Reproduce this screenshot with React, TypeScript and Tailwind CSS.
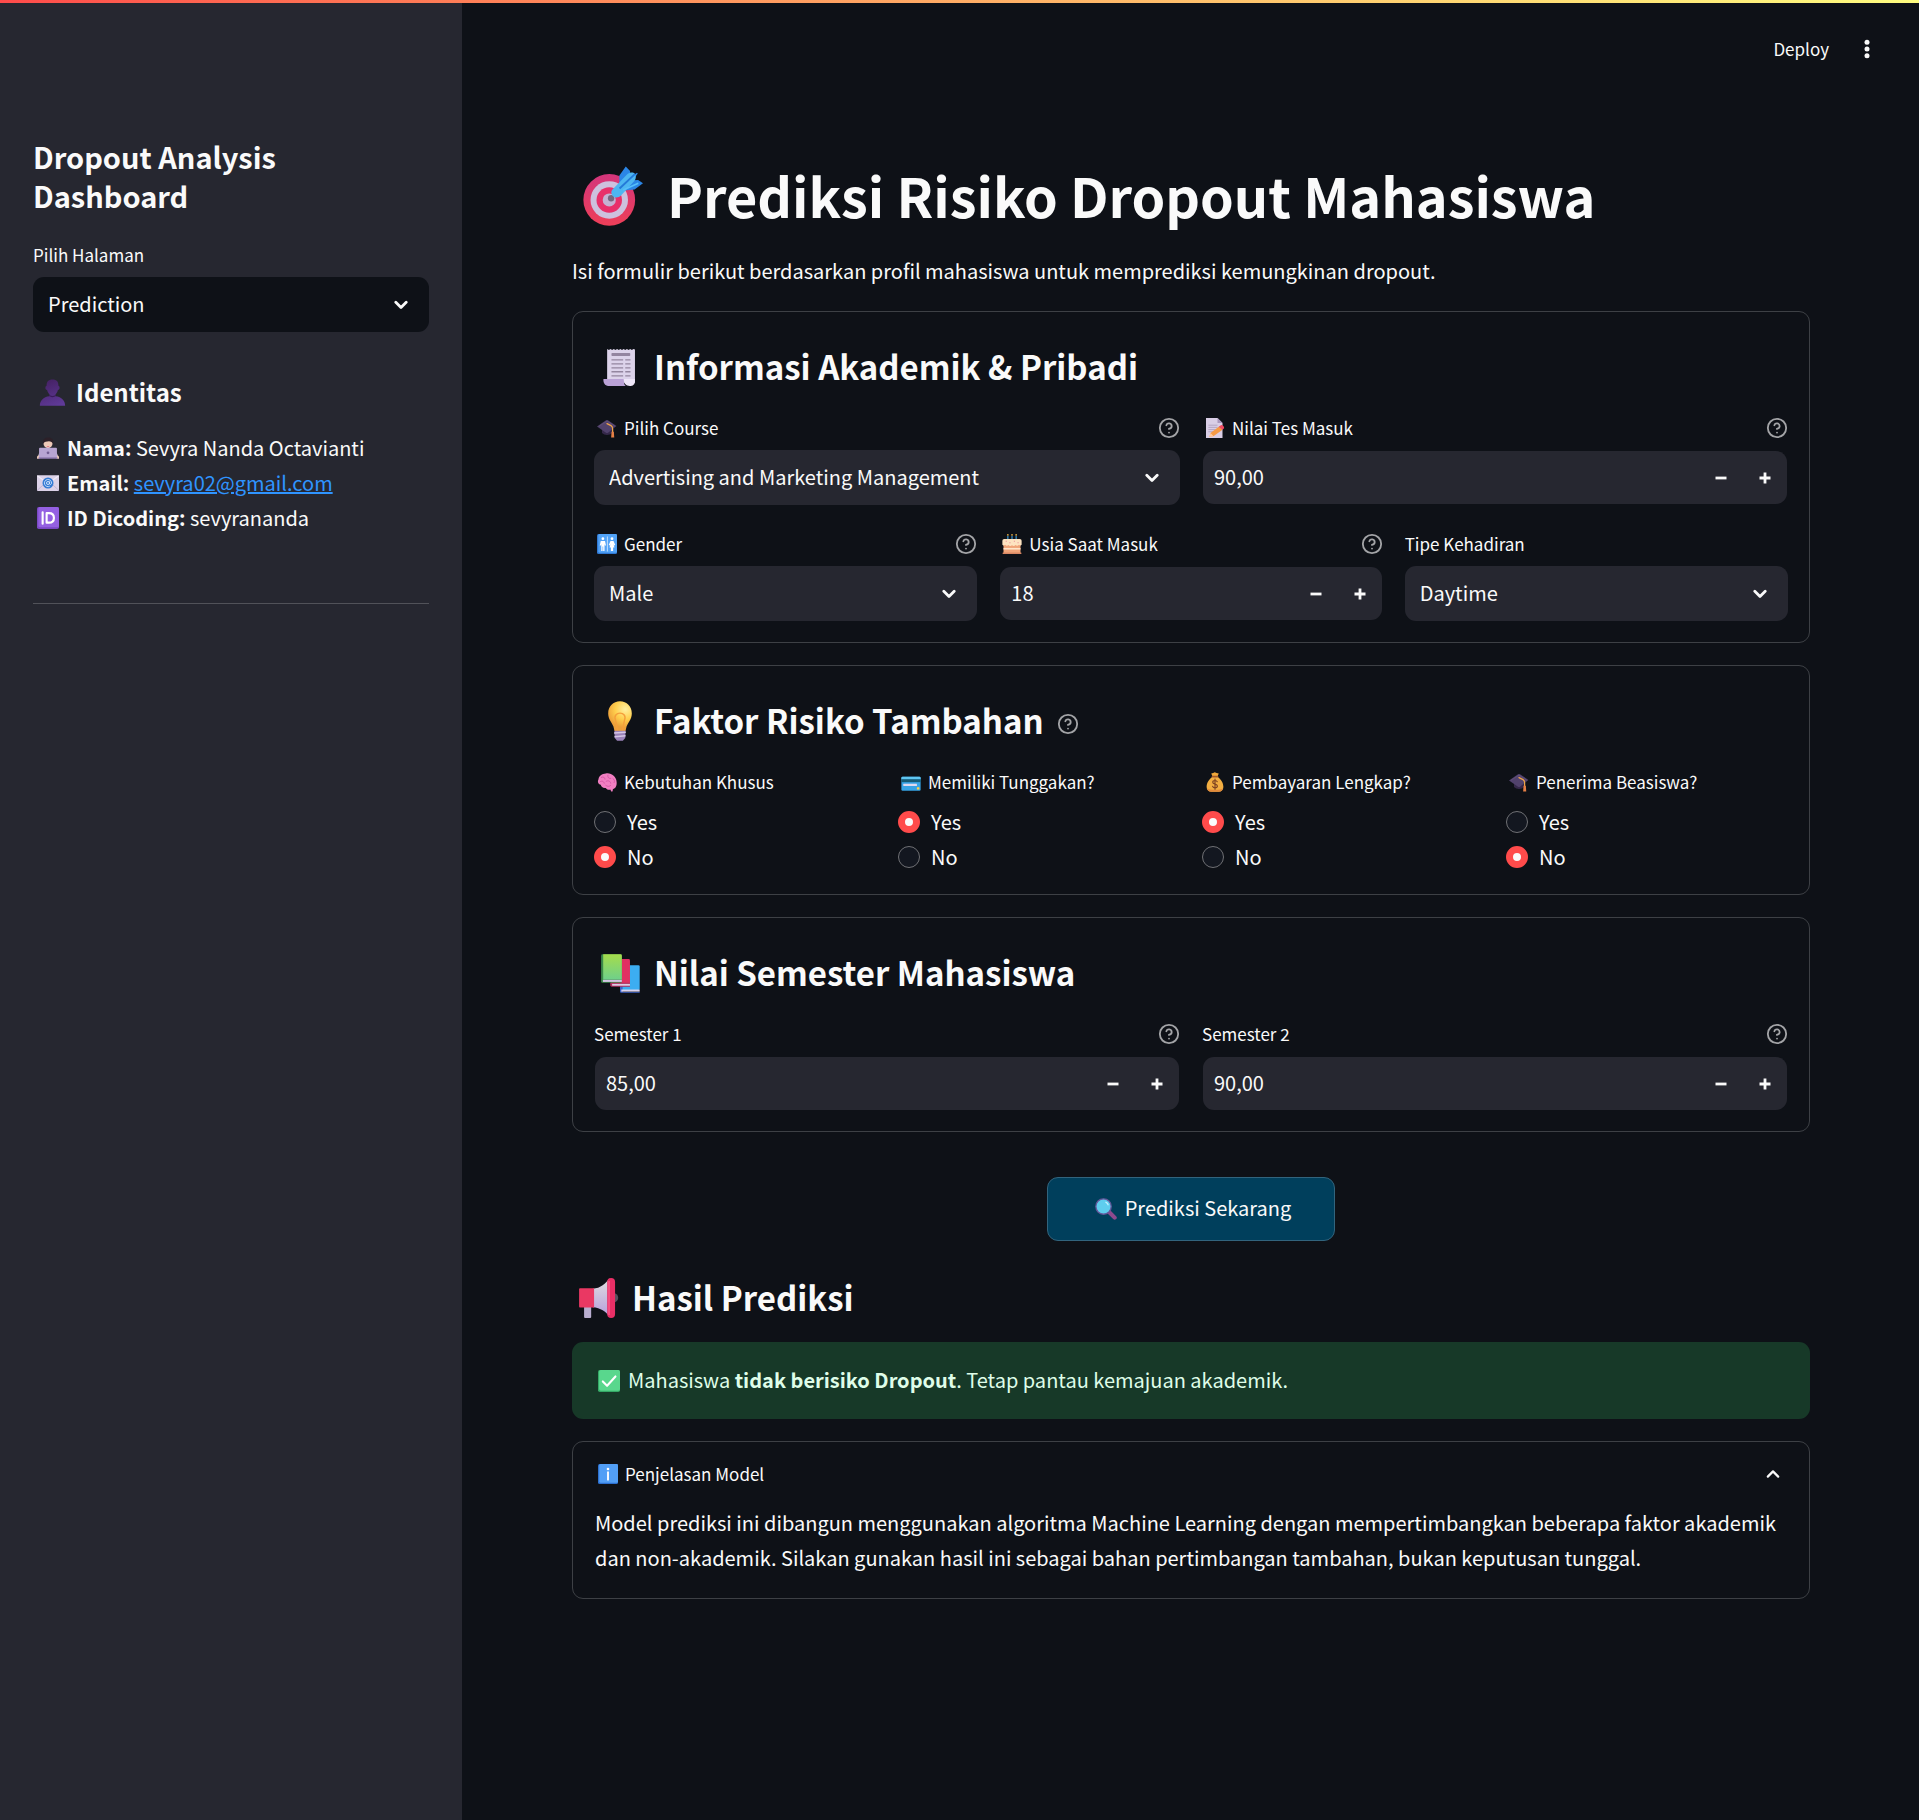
import { useId, useState } from "react";
import type { ReactNode } from "react";

type IconProps = { className?: string };

function Art({ className = "", children }: { className?: string; children: ReactNode }) {
  return (
    <svg viewBox="0 0 32 32" className={"shrink-0 " + className} aria-hidden="true" fill="none">
      {children}
    </svg>
  );
}

function TargetArt({ className }: IconProps) {
  return (
    <Art className={className}>
      <defs>
        <linearGradient id="target-red" x1="14" y1="4" x2="14" y2="32" gradientUnits="userSpaceOnUse">
          <stop stopColor="#d3357c" />
          <stop offset="1" stopColor="#ee3f58" />
        </linearGradient>
      </defs>
      <circle cx="14" cy="18.1" r="13.8" fill="url(#target-red)" />
      <circle cx="14" cy="18.1" r="10" fill="#cdc1de" />
      <circle cx="14" cy="18.1" r="6.8" fill="#e8306a" />
      <circle cx="14" cy="18.1" r="3.5" fill="#c3b2d2" />
      <circle cx="15" cy="17.2" r="1.7" fill="#75677f" />
      <path d="M19.4 10.5V5L22.8 0.2 25.1 2.6 25 6.2 28.8 3.6 29.2 4 26.6 7.6 29.4 7.4 32 9.2 27.5 12.5 22 13Z" fill="#2b86e6" />
      <path d="M15.6 12.6 23.6 4.4C25 3.2 27 3.2 27.6 4.2 28.6 5.6 28.2 7.2 27 8.4L20.4 15.6C18.8 17.2 16.6 17 15.8 15.8 15 14.8 14.8 13.6 15.6 12.6Z" fill="#4db6f1" />
      <path d="M19.5 12 27.8 4.2" stroke="#2379d8" strokeWidth="1" />
      <path d="M21.5 12.8 29.5 9.2" stroke="#56c0fa" strokeWidth=".9" />
    </Art>
  );
}

function ScrollArt({ className }: IconProps) {
  return (
    <Art className={className}>
      <path d="M6.2 2.2 7.5 3 8.8 2.2 10 3 11.3 2.2 12.5 3 13.8 2.2 15 3 16.3 2.2 17.5 3 18.8 2.2 20 3 21.3 2.2 22.5 3 23.8 2.2 25 3 26.3 2.2 27.4 2.6V28H6.2Z" fill="#dcd3ea" />
      <rect x="9.5" y="5.4" width="14.3" height="2.2" rx=".5" fill="#9385a0" />
      <path d="M9.5 10.6H18.4M20 10.6H24M9.5 13.6H18.4M20 13.6H24M9.5 16.6H18.4M20 16.6H24M9.5 19.6H18.4M20 19.6H24M9.5 22.7H18.4M20 22.7H24" stroke="#93869f" strokeWidth="1" />
      <path d="M3.4 25.2H18.8C19.2 27 18.6 29.2 20.4 30.4H7C4.6 30.4 3 28 3.4 25.2Z" fill="#baa2d6" />
      <path d="M18.9 25.2H27.4V26.8C27.4 29.2 25.8 30.5 23.4 30.5 20.6 30.5 19 29 18.9 25.2Z" fill="#eee6f8" />
    </Art>
  );
}

function BulbArt({ className }: IconProps) {
  return (
    <Art className={className}>
      <defs>
        <radialGradient id="bulb-glow" cx="20" cy="7" r="14" gradientUnits="userSpaceOnUse">
          <stop stopColor="#fff0a0" />
          <stop offset=".55" stopColor="#ffcf4d" />
          <stop offset="1" stopColor="#eda03a" />
        </radialGradient>
      </defs>
      <path d="M16 1C21.2 1 25 5 25 10.2 25 14.6 22 17.2 21 20.2L20.2 23.6H11.8L11 20.2C10 17.2 7 14.6 7 10.2 7 5 10.8 1 16 1Z" fill="url(#bulb-glow)" />
      <path d="M14.2 23.4 12.6 15.4C11.2 12 13.4 10 16 10S20.8 12 19.4 15.4L17.8 23.4" stroke="#f5a03c" strokeWidth="1.1" />
      <path d="M11.7 23.4H20.3L20 29 18.2 31H13.8L12 29Z" fill="#9a82b8" />
      <path d="M11.5 25.2 20.4 24.6M11.8 28 20.2 27.2" stroke="#d5c6e6" strokeWidth="1.2" />
    </Art>
  );
}

function BooksArt({ className }: IconProps) {
  return (
    <Art className={className}>
      <defs>
        <linearGradient id="book-green" x1="10" y1="2" x2="10" y2="21" gradientUnits="userSpaceOnUse">
          <stop stopColor="#a5dc4c" />
          <stop offset="1" stopColor="#6fd08a" />
        </linearGradient>
      </defs>
      <rect x="16" y="10" width="15" height="19" rx="1" fill="#3cadf2" />
      <path d="M16 26H18V30.4H31V31H16.8Q16 31 16 30Z" fill="#3c63c9" />
      <rect x="17" y="28.6" width="14" height="1.6" fill="#d9d2ee" />
      <rect x="9" y="5.4" width="14.6" height="20" rx="1" fill="#e03062" />
      <path d="M8.6 23.5H23.6V26.4H9.6Q8.6 26.4 8.6 25.4Z" fill="#b0305f" />
      <rect x="10" y="24.3" width="13.6" height="1.4" fill="#dccbe6" />
      <rect x="1.6" y="1.8" width="15.8" height="21.6" rx="1" fill="#3d8a4a" />
      <path d="M3.2 1.8H16.4Q17.4 1.8 17.4 2.8V21H3.2Z" fill="url(#book-green)" />
      <rect x="3" y="21.2" width="14.4" height="1.6" fill="#d2c4e4" />
    </Art>
  );
}

function MegaphoneArt({ className }: IconProps) {
  return (
    <Art className={className}>
      <defs>
        <linearGradient id="horn" x1="17" y1="4" x2="17" y2="28" gradientUnits="userSpaceOnUse">
          <stop stopColor="#dcd8e0" />
          <stop offset="1" stopColor="#b9a3dc" />
        </linearGradient>
      </defs>
      <g transform="translate(1 0)">
        <circle cx="27" cy="15.8" r="3.4" fill="#56505e" />
        <rect x="4.4" y="22" width="5.4" height="9.2" rx=".8" fill="#b9aed0" />
        <path d="M11 9C17 8.6 21 5 23.6 1V30C21 26.4 17 23.4 11 23Z" fill="url(#horn)" />
        <path d="M1.2 8.6H12V23.2H1.2Q.6 23.2 .6 22.4V9.4Q.6 8.6 1.2 8.6Z" fill="#ea3863" />
        <rect x="22" y=".8" width="6" height="30.4" rx="3" fill="#e92f66" />
        <path d="M23.4 3V29" stroke="#ff5c8c" strokeWidth="1" />
      </g>
    </Art>
  );
}

function PersonArt({ className }: IconProps) {
  return (
    <Art className={className}>
      <defs>
        <linearGradient id="bust" x1="10" y1="2" x2="22" y2="32" gradientUnits="userSpaceOnUse">
          <stop stopColor="#462266" />
          <stop offset="1" stopColor="#5f3a98" />
        </linearGradient>
      </defs>
      <path d="M16 .5C21 .5 23 3 23 8 25 8.4 25 13 22.4 13 21.6 16 20.4 17.2 19.6 18V20.4C27 21 31 26 31 31.6H1C1 26 5 21 12.4 20.4V18C11.6 17.2 10.4 16 9.6 13 7 13 7 8.4 9 8 9 3 11 .5 16 .5Z" fill="url(#bust)" />
      <path d="M12 19.4C14.6 21.4 17.4 21.4 20 19.4" stroke="#3a1c5a" strokeWidth="1.4" />
    </Art>
  );
}

function TechnologistArt({ className }: IconProps) {
  return (
    <Art className={className}>
      <path d="M2 30C1 22 7 18.6 16 18.6S31 22 30 30Z" fill="#cfc5da" />
      <circle cx="16" cy="9.6" r="6.6" fill="#edc9b8" />
      <path d="M8.8 10C7.6 3.6 11.6.6 16.4.8 21.6.8 24.8 3.8 23.4 10 22.4 7 20 6.6 17.4 6 14 6.4 10.6 6.4 8.8 10Z" fill="#2c2028" />
      <path d="M14 13.4Q16 15 18 13.4Z" fill="#d3305a" />
      <path d="M0 29.4C0 27 2 26.6 3.6 27V31.6H0ZM32 29.4C32 27 30 26.6 28.4 27V31.6H32Z" fill="#edc9b8" />
      <rect x="3" y="15.6" width="26" height="14.6" rx="1.4" fill="#b7a5d2" />
      <rect x="2" y="29.4" width="28" height="2.4" rx="1" fill="#927db4" />
      <circle cx="16" cy="23" r="2" fill="#715d92" />
    </Art>
  );
}

function EmailArt({ className }: IconProps) {
  return (
    <Art className={className}>
      <rect y="4.6" width="32" height="23" rx="1.4" fill="#dcd2e8" />
      <path d="M0 27 12 16M32 27 20 16" stroke="#bfb0d2" strokeWidth="1.2" />
      <path d="M.4 5.4 16 17 31.6 5.4" stroke="#f2ecf8" strokeWidth="1.6" />
      <circle cx="16" cy="16" r="8" fill="#347bd4" />
      <circle cx="16" cy="16" r="2.2" stroke="#dcecff" strokeWidth="1.3" />
      <path d="M18.3 13.6V17.2C18.8 19 21.2 18.2 21.2 16A5.2 5.2 0 1 0 18.6 20.6" stroke="#dcecff" strokeWidth="1.2" />
    </Art>
  );
}

function IdArt({ className }: IconProps) {
  return (
    <Art className={className}>
      <rect width="32" height="32" rx="2.6" fill="#7b48c6" />
      <rect x="2" width="30" height="29.6" rx="2.4" fill="#9460e2" />
      <path d="M8.2 7.6V24.2M14 9V22.8H17.4C22.6 22.8 24.6 20 24.6 15.9S22.6 9 17.4 9Z" stroke="#fff" strokeWidth="3.1" strokeLinecap="round" strokeLinejoin="round" />
    </Art>
  );
}

function CapArt({ className }: IconProps) {
  return (
    <Art className={className}>
      <path d="M8 14V24C12 28 20 28 24 24V14Z" fill="#35284a" />
      <path d="M0 13.5 14.5 3.4Q16 2.6 17.5 3.4L31 12.6 17.6 23.6Q16 24.6 14.4 23.6Z" fill="#51426c" />
      <path d="M3 13.4 16 5 28 12.8" stroke="#66557f" strokeWidth="1" />
      <path d="M16 9 22.4 12.2Q25 13.6 25 17V23" stroke="#efa54a" strokeWidth="2" strokeLinecap="round" />
      <path d="M23.2 22H27L27.6 31H22.6Z" fill="#e57f45" />
    </Art>
  );
}

function MemoArt({ className }: IconProps) {
  return (
    <Art className={className}>
      <path d="M1.6 0H20L28 8V32H1.6Z" fill="#d9cee6" />
      <path d="M20 0V8H28Z" fill="#a897bd" />
      <path d="M5.4 11.5H20M5.4 15H20M5.4 18.5H17M5.4 22H14" stroke="#a99ab8" strokeWidth="1.2" />
      <path d="M7 30.4 8.8 23.8 22.6 13.4 28 18.6 14 28.8Z" fill="#f69a45" />
      <path d="M22 13.8 25.4 11.4C27.6 10.6 31 13.4 30.6 16.4L27.6 18.8Z" fill="#ef4a62" />
      <path d="M7 30.4 8.8 23.8 13.8 29Z" fill="#ffc9a0" />
    </Art>
  );
}

function RestroomArt({ className }: IconProps) {
  return (
    <Art className={className}>
      <rect width="32" height="32" rx="2.4" fill="#2f78d2" />
      <rect x="2" width="30" height="30" rx="2.2" fill="#52a3f7" />
      <path d="M16.6 4V28" stroke="#e8f4ff" strokeWidth="1.2" />
      <circle cx="9.4" cy="7.4" r="2.2" fill="#fff" />
      <path d="M6 11H12.8L14.4 18.4H12.6L12 16V27H9.9V20H8.9V27H6.8V16L6.2 18.4H4.4Z" fill="#fff" />
      <circle cx="24" cy="7.4" r="2.2" fill="#fff" />
      <path d="M21.6 11H26.4L29.2 17.6 27.6 18.2 26.4 15.8 28 21.4H25.8V27H22.2V21.4H20L21.6 15.8 20.4 18.2 18.8 17.6Z" fill="#fff" />
    </Art>
  );
}

function CakeArt({ className }: IconProps) {
  return (
    <Art className={className}>
      <path d="M9.4 3V10M16 3V10M22.6 3V10" stroke="#3fa8e8" strokeWidth="1.7" />
      <path d="M9.4 0V2.6M16 0V2.6M22.6 0V2.6" stroke="#ffc24a" strokeWidth="1.9" />
      <rect x="2.4" y="16" width="27.2" height="16" rx="2" fill="#f0a479" />
      <path d="M2.4 23.6H29.6" stroke="#ffe4c8" strokeWidth="2.6" />
      <path d="M.6 10.6Q.6 8 3.4 8H28.6Q31.4 8 31.4 10.6V17Q29.4 19.4 27 17.2 24.6 20 21.6 17.6 19 20.4 16 17.8 13 20.4 10.4 17.6 7.6 20 5 17.2 2.6 19.4.6 17Z" fill="#fde3c0" />
      <path d="M6 11.6H7.4M12 14H13.4M19 11.6H20.4M25 14H26.4" stroke="#e2688a" strokeWidth="1.4" />
      <rect x=".8" y="29.6" width="30.4" height="2.2" rx="1" fill="#d98763" />
    </Art>
  );
}

function BrainArt({ className }: IconProps) {
  return (
    <Art className={className}>
      <path d="M14 2.4C22 .6 31 6.6 31.4 16 32 22 29.6 26.6 25.4 27.4L25 30.6C23.4 32 21.6 31 22 28.4 18 29 15.6 27.6 14 25.4 9.6 26 6.6 23.6 6 20.4 2 19.6.4 15.6 2.4 11.6 3 6.4 8 2.6 14 2.4Z" fill="#f17fc2" />
      <path d="M7 8.6C10 7 12.6 8.4 12.8 11.4M4.8 15.6C8 13.4 11 15 11.6 18M17.4 5C16.6 8.4 18.6 10.8 22 10.4M14.6 15C17.6 12.8 21.6 14.4 22 18M25.6 10.6C28 12 28.6 14.6 27.4 17M14 21.4C16.4 23.6 20 23.4 21.8 21.6" stroke="#cf4f9f" strokeWidth="1.2" strokeLinecap="round" />
    </Art>
  );
}

function CardArt({ className }: IconProps) {
  return (
    <Art className={className}>
      <rect x=".6" y="7.6" width="30.8" height="22.4" rx="2" fill="#36a3e4" />
      <path d="M.6 12V9.6Q.6 7.6 2.6 7.6H29.4Q31.4 7.6 31.4 9.6V12Z" fill="#5fc6f2" />
      <rect x=".6" y="11.6" width="30.8" height="4.6" fill="#155a74" />
      <rect x="3.6" y="18.8" width="22" height="3.4" rx=".6" fill="#ddd8ee" />
      <rect x="25.4" y="24.4" width="4" height="3.6" rx=".6" fill="#ffd04a" />
    </Art>
  );
}

function MoneyBagArt({ className }: IconProps) {
  return (
    <Art className={className}>
      <path d="M10 2.4 13 1.4 15.6.2 18.6 1.6 22 2.2 20 7H12Z" fill="#f0a83a" />
      <path d="M12 7.4H20C26 11.4 29.6 18 29.4 24 29.4 29 26 31.6 22 31.6H10C6 31.6 2.6 29 2.6 24 2.4 18 6 11.4 12 7.4Z" fill="#f2ae42" />
      <path d="M3 26C4 30 7 31.6 10 31.6H22C25 31.6 28 30 29 26 24 29.4 8 29.4 3 26Z" fill="#e08a3c" />
      <rect x="10.6" y="6" width="10.8" height="2.6" rx="1.3" fill="#a35a2a" />
      <path d="M19.6 15.6C18.8 14 17.4 13.6 16 13.6 14 13.6 12.4 14.8 12.4 16.4 12.4 20.4 19.8 18.2 19.8 22.4 19.8 24.2 18.2 25.4 16 25.4 14.2 25.4 12.8 24.6 12.2 23M16 11.4V27.6" stroke="#7f4422" strokeWidth="1.9" strokeLinecap="round" />
    </Art>
  );
}

function MagnifierArt({ className }: IconProps) {
  return (
    <Art className={className}>
      <path d="M20.4 20.4 28.6 28.6" stroke="#8d4a8e" strokeWidth="6" strokeLinecap="round" />
      <path d="M18 18 21 21" stroke="#6e5a86" strokeWidth="3" />
      <circle cx="12.4" cy="12.4" r="11.2" fill="#5fcdee" stroke="#66559a" strokeWidth="1.9" />
      <path d="M16 6.2Q18.6 7.4 19 9.8" stroke="#c3f0ff" strokeWidth="2" strokeLinecap="round" />
    </Art>
  );
}

function CheckArt({ className }: IconProps) {
  return (
    <Art className={className}>
      <rect width="32" height="32" rx="2.6" fill="#35a866" />
      <rect x="1.6" y="0" width="30.4" height="30.2" rx="2.4" fill="#59d78d" />
      <path d="M7 16.6 13.2 23 25.4 9.4" stroke="#fff" strokeWidth="3" strokeLinecap="round" strokeLinejoin="round" />
    </Art>
  );
}

function InfoArt({ className }: IconProps) {
  return (
    <Art className={className}>
      <rect width="32" height="32" rx="2.6" fill="#2c70d0" />
      <rect x="2" width="30" height="30" rx="2.2" fill="#529ff6" />
      <circle cx="16" cy="8" r="2.1" fill="#fff" />
      <path d="M16 13V25" stroke="#fff" strokeWidth="3" strokeLinecap="round" />
    </Art>
  );
}

function HelpButton({ topic }: { topic: string }) {
  return (
    <button type="button" aria-label={"Bantuan: " + topic} className="shrink-0 text-[#a3a4a7]">
      <svg viewBox="0 0 24 24" className="size-[22px]" fill="none" stroke="currentColor" strokeWidth="2" strokeLinecap="round" strokeLinejoin="round" aria-hidden="true">
        <circle cx="12" cy="12" r="10" />
        <path d="M9.09 9a3 3 0 0 1 5.83 1c0 2-3 3-3 3" />
        <path d="M12 17h.01" />
      </svg>
    </button>
  );
}

function Chevron({ up = false }: { up?: boolean }) {
  return (
    <svg viewBox="0 0 14 10" className="h-[10px] w-[14px]" fill="none" stroke="currentColor" strokeLinecap="round" strokeLinejoin="round" aria-hidden="true">
      {up ? <path d="M1.8 7.6 7 2.4l5.2 5.2" strokeWidth="2.2" /> : <path d="M1.8 2.2 7 7.4l5.2-5.2" strokeWidth="2.8" />}
    </svg>
  );
}

type FieldProps = { label: string; icon?: ReactNode; help?: boolean };

function FieldLabel({ id, label, icon, help }: FieldProps & { id: string }) {
  return (
    <div className="mb-2 flex h-7 items-center justify-between">
      <label htmlFor={id} className="flex items-center gap-[7px] text-[17px] leading-7">
        {icon}
        <span>{label}</span>
      </label>
      {help && <HelpButton topic={label} />}
    </div>
  );
}

function SelectField({ label, icon, help, options, dark = false }: FieldProps & { options: string[]; dark?: boolean }) {
  const id = useId();
  return (
    <div className="min-w-0 flex-1">
      <FieldLabel id={id} label={label} icon={icon} help={help} />
      <div className="relative">
        <select
          id={id}
          className={
            "block h-[55px] w-full appearance-none rounded-[11px] pr-12 pb-[2px] pl-[15px] text-[20px] outline-none " +
            (dark ? "bg-[#0e1117]" : "bg-[#262730]")
          }
        >
          {options.map((o) => (
            <option key={o}>{o}</option>
          ))}
        </select>
        <span className="pointer-events-none absolute inset-y-0 right-[21px] flex items-center">
          <Chevron />
        </span>
      </div>
    </div>
  );
}

function NumberField({ label, icon, help, initial, decimals = 0 }: FieldProps & { initial: number; decimals?: number }) {
  const id = useId();
  const [value, setValue] = useState(initial);
  return (
    <div className="min-w-0 flex-1">
      <FieldLabel id={id} label={label} icon={icon} help={help} />
      <div className="mx-px mt-[9px] flex h-[53px] rounded-[11px] bg-[#262730]">
        <input
          id={id}
          type="text"
          inputMode="decimal"
          readOnly
          value={value.toFixed(decimals).replace(".", ",")}
          className="min-w-0 flex-1 bg-transparent pb-[2px] pl-[11px] text-[20px] outline-none"
        />
        <button type="button" aria-label={"Kurangi " + label} onClick={() => setValue(value - 1)} className="flex w-11 items-center justify-center">
          <svg viewBox="0 0 12 12" className="size-3" aria-hidden="true">
            <path d="M.5 4.6h11v2.8H.5z" fill="currentColor" />
          </svg>
        </button>
        <button type="button" aria-label={"Tambah " + label} onClick={() => setValue(value + 1)} className="flex w-11 items-center justify-center">
          <svg viewBox="0 0 12 12" className="size-3" aria-hidden="true">
            <path d="M4.6.5h2.8v4.1h4.1v2.8H7.4v4.1H4.6V7.4H.5V4.6h4.1z" fill="currentColor" />
          </svg>
        </button>
      </div>
    </div>
  );
}

function RadioField({ label, icon, initial }: { label: string; icon: ReactNode; initial: "Yes" | "No" }) {
  const name = useId();
  return (
    <fieldset className="min-w-0 flex-1">
      <legend className="mb-[10px] flex h-7 items-center gap-[7px] text-[17px] leading-7">
        {icon}
        <span>{label}</span>
      </legend>
      <div className="flex flex-col gap-[3px]">
        {["Yes", "No"].map((option) => (
          <label key={option} className="flex h-8 items-center gap-[11px] text-[20px] leading-8">
            <input
              type="radio"
              name={name}
              defaultChecked={option === initial}
              className="size-[22px] appearance-none rounded-full border border-[#6f7074] bg-[#131720] checked:border-[7px] checked:border-[#ff4b4b] checked:bg-[#fafafa]"
            />
            {option}
          </label>
        ))}
      </div>
    </fieldset>
  );
}

function SectionTitle({ icon, title, help }: { icon: ReactNode; title: string; help?: boolean }) {
  return (
    <div className="mb-[13px] ml-[5px] flex h-[68px] items-center gap-[13px]">
      {icon}
      <h2 className="pb-[3px] text-[33px] leading-[46px] font-semibold">{title}</h2>
      {help && (
        <span className="flex pt-[6px]">
          <HelpButton topic={title} />
        </span>
      )}
    </div>
  );
}

function Card({ children }: { children: ReactNode }) {
  return <section className="rounded-[11px] border border-[#3d4045] p-[21px]">{children}</section>;
}

const LABEL_ICON = "ml-[3px] size-5";
const TITLE_ICON = "size-[42px]";

function Sidebar() {
  return (
    <aside className="w-[462px] shrink-0 bg-[#262730] px-[33px] pt-[137px]">
      <h1 className="max-w-[300px] text-[29px] leading-[39px] font-semibold">Dropout Analysis Dashboard</h1>
      <div className="mt-[26px]">
        <SelectField label="Pilih Halaman" options={["Prediction", "Dashboard"]} dark />
      </div>
      <h2 className="mt-[43px] ml-[6px] flex items-center gap-[10px] text-[24px] leading-[34px] font-semibold">
        <PersonArt className="size-[27px]" />
        Identitas
      </h2>
      <ul className="mt-[21px] ml-1 text-[20px] leading-[35px]">
        <li className="flex items-center gap-[8px]">
          <TechnologistArt className="size-[22px]" />
          <span><strong className="font-bold">Nama:</strong> Sevyra Nanda Octavianti</span>
        </li>
        <li className="flex items-center gap-[8px]">
          <EmailArt className="size-[22px]" />
          <span>
            <strong className="font-bold">Email:</strong>{" "}
            <a href="mailto:sevyra02@gmail.com" className="text-[#2f94ff] underline">sevyra02@gmail.com</a>
          </span>
        </li>
        <li className="flex items-center gap-[8px]">
          <IdArt className="size-[22px]" />
          <span><strong className="font-bold">ID Dicoding:</strong> sevyrananda</span>
        </li>
      </ul>
      <hr className="mt-[68px] border-[#515259]" />
    </aside>
  );
}

export default function App() {
  return (
    <div className="flex min-h-screen flex-col bg-[#0e1117] font-['Noto_Sans_CJK_SC','Noto_Sans',sans-serif] text-[#fafafa]">
      <div className="relative h-0">
        <div className="absolute inset-x-0 top-0 h-[3px] bg-linear-to-r from-[#ff4b4b] to-[#fffd80]" />
      </div>
      <div className="flex flex-1">
        <Sidebar />
        <div className="min-w-0 flex-1">
          <header className="flex h-[98px] items-center justify-end gap-[35px] pr-[49px] text-[17px]">
            <button type="button">Deploy</button>
            <button type="button" aria-label="Menu utama">
              <svg viewBox="0 0 6 20" className="h-5 w-[6px]" fill="currentColor" aria-hidden="true">
                <circle cx="3" cy="3.2" r="2.5" />
                <circle cx="3" cy="10" r="2.5" />
                <circle cx="3" cy="16.8" r="2.5" />
              </svg>
            </button>
          </header>

          <main className="pt-[58px] pr-[109px] pb-[110px] pl-[110px]">
            <h1 className="ml-[11px] flex h-20 items-center gap-[24px] text-[54px] leading-[76px] font-bold">
              <TargetArt className="size-[60px]" />
              <span className="pb-[3px]">Prediksi Risiko Dropout Mahasiswa</span>
            </h1>
            <p className="mt-[17px] text-[20px] leading-[35px]">
              Isi formulir berikut berdasarkan profil mahasiswa untuk memprediksi kemungkinan dropout.
            </p>

            <form className="mt-[23px] flex flex-col gap-[22px]" onSubmit={(e) => e.preventDefault()}>
              <Card>
                <SectionTitle icon={<ScrollArt className={TITLE_ICON} />} title="Informasi Akademik & Pribadi" />
                <div className="flex gap-[22px]">
                  <SelectField label="Pilih Course" icon={<CapArt className={LABEL_ICON} />} help options={["Advertising and Marketing Management"]} />
                  <NumberField label="Nilai Tes Masuk" icon={<MemoArt className={LABEL_ICON} />} help initial={90} decimals={2} />
                </div>
                <div className="mt-[25px] flex gap-[22px]">
                  <SelectField label="Gender" icon={<RestroomArt className={LABEL_ICON} />} help options={["Male", "Female"]} />
                  <NumberField label="Usia Saat Masuk" icon={<CakeArt className={LABEL_ICON} />} help initial={18} />
                  <SelectField label="Tipe Kehadiran" options={["Daytime", "Evening"]} />
                </div>
              </Card>

              <Card>
                <SectionTitle icon={<BulbArt className={TITLE_ICON} />} title="Faktor Risiko Tambahan" help />
                <div className="flex gap-[22px]">
                  <RadioField label="Kebutuhan Khusus" icon={<BrainArt className={LABEL_ICON} />} initial="No" />
                  <RadioField label="Memiliki Tunggakan?" icon={<CardArt className={LABEL_ICON} />} initial="Yes" />
                  <RadioField label="Pembayaran Lengkap?" icon={<MoneyBagArt className={LABEL_ICON} />} initial="Yes" />
                  <RadioField label="Penerima Beasiswa?" icon={<CapArt className={LABEL_ICON} />} initial="No" />
                </div>
              </Card>

              <Card>
                <SectionTitle icon={<BooksArt className={TITLE_ICON} />} title="Nilai Semester Mahasiswa" />
                <div className="flex gap-[22px]">
                  <NumberField label="Semester 1" help initial={85} decimals={2} />
                  <NumberField label="Semester 2" help initial={90} decimals={2} />
                </div>
              </Card>

              <button
                type="submit"
                className="mt-[23px] flex h-16 w-[288px] items-center justify-center gap-[8px] self-center rounded-[11px] border border-[#32647d] bg-[#003f5c] pl-1 text-[20px]"
              >
                <MagnifierArt className="size-[22px]" />
                <span className="pb-[2px]">Prediksi Sekarang</span>
              </button>
            </form>

            <div className="mt-[23px]">
              <SectionTitle icon={<MegaphoneArt className={TITLE_ICON} />} title="Hasil Prediksi" />
            </div>

            <div role="status" className="-mt-[3px] flex h-[77px] items-center gap-[8px] rounded-[11px] bg-[#173928] px-[26px] text-[20px] text-[#dffde9]">
              <CheckArt className="size-[22px]" />
              <p className="pb-[2px]">
                Mahasiswa <strong className="font-bold">tidak berisiko Dropout</strong>. Tetap pantau kemajuan akademik.
              </p>
            </div>

            <details open className="mt-[22px] rounded-[11px] border border-[#3d4045] px-[22px] pb-[23px]">
              <summary className="flex h-[63px] cursor-pointer list-none items-center gap-[7px] text-[17px]">
                <InfoArt className={LABEL_ICON} />
                <span className="flex-1">Penjelasan Model</span>
                <span className="mr-[7px]">
                  <Chevron up />
                </span>
              </summary>
              <p className="text-[20px] leading-[35px]">
                Model prediksi ini dibangun menggunakan algoritma Machine Learning dengan mempertimbangkan beberapa faktor akademik dan non-akademik. Silakan gunakan hasil ini sebagai bahan pertimbangan tambahan, bukan keputusan tunggal.
              </p>
            </details>
          </main>
        </div>
      </div>
    </div>
  );
}
